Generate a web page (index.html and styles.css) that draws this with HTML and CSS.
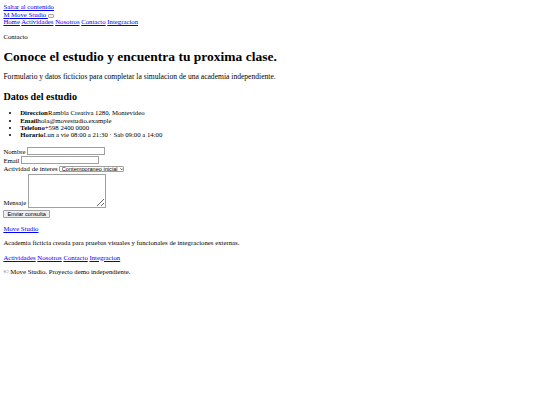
FILE: index.html
```html
<!DOCTYPE html>
<html lang="es">
<head>
<meta charset="utf-8">
<title>Contacto - Move Studio</title>
<link rel="stylesheet" href="styles.css">
</head>
<body>
<a class="skip" href="#contenido">Saltar al contenido</a>
<header class="site-header">
<div class="brand-row"><a class="brand" href="#"><span class="brand-mark">M</span> Move Studio </a><button class="menu-toggle" type="button" aria-label="Abrir menu"></button></div>
<nav class="main-nav"><a href="#">Home</a> <a href="#">Actividades</a> <a href="#">Nosotros</a> <a href="#">Contacto</a> <a href="#">Integracion</a></nav>
</header>
<main id="contenido" class="content">
<p class="eyebrow">Contacto</p>
<h1 class="title">Conoce el estudio y encuentra tu proxima clase.</h1>
<p class="lead">Formulario y datos ficticios para completar la simulacion de una academia independiente.</p>
<h2 class="section-title">Datos del estudio</h2>
<ul class="info-list">
<li><strong>Direccion</strong>Rambla Creativa 1280, Montevideo</li>
<li><strong>Email</strong>hola@movestudio.example</li>
<li><strong>Telefono</strong>+598 2400 0000</li>
<li><strong>Horario</strong>Lun a vie 08:00 a 21:30 · Sab 09:00 a 14:00</li>
</ul>
<form class="contact-form">
<div class="field"><label for="nombre">Nombre</label><input class="text-input" id="nombre" type="text"></div>
<div class="field"><label for="email">Email</label><input class="text-input" id="email" type="email"></div>
<div class="field"><label for="actividad">Actividad de interes</label><span class="select-wrap"><select class="select" id="actividad"><option>Contemporaneo inicial</option><option>Yoga</option></select><svg class="select-arrow" viewBox="0 0 6 4" width="3.4" height="2.4"><path d="M0.6 0.6 L3 3.2 L5.4 0.6" fill="none" stroke="#222" stroke-width="1.2"/></svg></span></div>
<div class="field field-area"><label for="mensaje">Mensaje</label><textarea class="textarea" id="mensaje"></textarea></div>
<button class="submit" type="submit">Enviar consulta</button>
</form>
</main>
<footer class="site-footer">
<p><a href="#">Move Studio</a></p>
<p>Academia ficticia creada para pruebas visuales y funcionales de integraciones externas.</p>
<nav class="footer-nav"><a href="#">Actividades</a> <a href="#">Nosotros</a> <a href="#">Contacto</a> <a href="#">Integracion</a></nav>
<p>© Move Studio. Proyecto demo independiente.</p>
</footer>
</body>
</html>
```
FILE: styles.css
```css
html {
  background: #fff;
}
body {
  margin: 3.375px;
  font-family: "Liberation Serif", "Times New Roman", serif;
  font-size: 6.75px;
  line-height: 7.5px;
  color: #000;
}
a {
  color: #0000ee;
}
p {
  margin: 6.75px 0;
}
.title {
  font-size: 13.5px;
  line-height: 15.1px;
  margin: 9.05px 0;
}
.lead {
  font-size: 7.59px;
  line-height: 8.7px;
  margin: 9.05px 0 8.5px;
}
.section-title {
  font-size: 10.125px;
  line-height: 11.6px;
  margin: 8.4px 0 7.3px;
}
.info-list {
  margin: 7.3px 0 6.75px;
  padding-left: 16.875px;
  line-height: 7.25px;
}
.menu-toggle {
  display: inline-block;
  width: 6px;
  height: 3.4px;
  padding: 0;
  margin: 0;
  border: 1px solid #a8a8a8;
  border-radius: 1px;
  background: #efefef;
  vertical-align: baseline;
}
.contact-form {
  margin: 0;
  padding-top: 2.1px;
  display: flex;
  flex-direction: column;
  align-items: flex-start;
  gap: 1px;
}
.field {
  display: flex;
  align-items: center;
  gap: 1.6px;
}
.field-area {
  align-items: flex-end;
}
.field-area label {
  padding-bottom: 1.2px;
}
.text-input {
  box-sizing: border-box;
  width: 77.5px;
  height: 8px;
  margin: 0;
  padding: 0 1px;
  border: 1px solid #a0a0a0;
  font: 5.6px "Liberation Sans", Arial, sans-serif;
}
.select-wrap {
  position: relative;
  display: inline-block;
  height: 6.8px;
}
.select {
  appearance: none;
  display: block;
  box-sizing: border-box;
  width: 65px;
  height: 6.8px;
  margin: 0;
  padding: 0 4px 0 1.5px;
  border: 1px solid #a0a0a0;
  border-radius: 1px;
  background: #fff;
  color: #000;
  font: 5.6px "Liberation Sans", Arial, sans-serif;
  line-height: 4.8px;
}
.select-arrow {
  position: absolute;
  right: 1.3px;
  top: 2.2px;
}
.textarea {
  box-sizing: border-box;
  width: 77.8px;
  height: 34px;
  margin: 0;
  padding: 1px;
  border: 1px solid #a0a0a0;
  font: 5.6px "Liberation Mono", monospace;
}
.submit {
  box-sizing: border-box;
  width: 46.6px;
  height: 8.7px;
  margin: 1px 0 0;
  padding: 0;
  border: 1px solid #a0a0a0;
  border-radius: 1px;
  background: #efefef;
  color: #000;
  font: 5.6px "Liberation Sans", Arial, sans-serif;
}
.footer-nav {
  display: block;
}
```
